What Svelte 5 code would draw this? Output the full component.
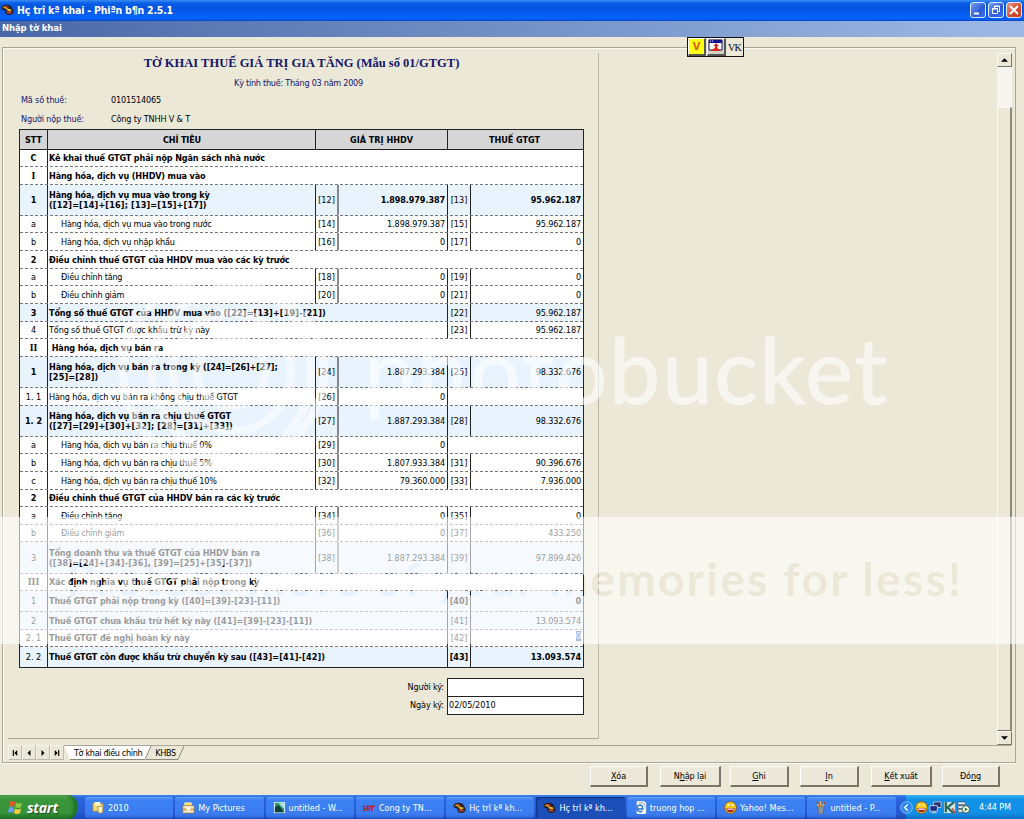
<script lang="ts">
  type Row = {
    no: string;
    name: string;
    formula?: string;
    wrap?: boolean;
    h: number;
    bold?: boolean;
    boldNo?: boolean;
    indent?: boolean;
    blue?: boolean;
    c1?: string;
    v1?: string;
    c2?: string;
    v2?: string;
    boldValue?: boolean;
    boldCode?: boolean;
    selected?: boolean;
  };

  const rows: Row[] = [
    { no: "C", name: "Kê khai thuế GTGT phải nộp Ngân sách nhà nước", h: 17, bold: true, boldNo: true },
    { no: "I", name: "Hàng hóa, dịch vụ (HHDV) mua vào", h: 18, bold: true, boldNo: true },
    { no: "1", name: "Hàng hóa, dịch vụ mua vào trong kỳ", formula: "([12]=[14]+[16]; [13]=[15]+[17])", wrap: true, h: 31, bold: true, boldNo: true, blue: true, c1: "[12]", v1: "1.898.979.387", c2: "[13]", v2: "95.962.187", boldValue: true },
    { no: "a", name: "Hàng hóa, dịch vụ mua vào trong nước", h: 17, indent: true, c1: "[14]", v1: "1.898.979.387", c2: "[15]", v2: "95.962.187" },
    { no: "b", name: "Hàng hóa, dịch vụ nhập khẩu", h: 18, indent: true, c1: "[16]", v1: "0", c2: "[17]", v2: "0" },
    { no: "2", name: "Điều chỉnh thuế GTGT của HHDV mua vào các kỳ trước", h: 18, bold: true, boldNo: true },
    { no: "a", name: "Điều chỉnh tăng", h: 17, indent: true, c1: "[18]", v1: "0", c2: "[19]", v2: "0" },
    { no: "b", name: "Điều chỉnh giảm", h: 18, indent: true, c1: "[20]", v1: "0", c2: "[21]", v2: "0" },
    { no: "3", name: "Tổng số thuế GTGT của HHDV mua vào", formula: "([22]=[13]+[19]-[21])", h: 18, bold: true, boldNo: true, blue: true, c2: "[22]", v2: "95.962.187" },
    { no: "4", name: "Tổng số thuế GTGT được khấu trừ kỳ này", h: 17, c2: "[23]", v2: "95.962.187" },
    { no: "II", name: "\u00a0Hàng hóa, dịch vụ bán ra", h: 18, bold: true, boldNo: true },
    { no: "1", name: "Hàng hóa, dịch vụ bán ra trong kỳ ([24]=[26]+[27];", formula: "[25]=[28])", wrap: true, h: 31, bold: true, boldNo: true, blue: true, c1: "[24]", v1: "1.887.293.384", c2: "[25]", v2: "98.332.676" },
    { no: "1. 1", name: "Hàng hóa, dịch vụ bán ra không chịu thuế GTGT", h: 18, c1: "[26]", v1: "0" },
    { no: "1. 2", name: "Hàng hóa, dịch vụ bán ra chịu thuế GTGT", formula: "([27]=[29]+[30]+[32]; [28]=[31]+[33])", wrap: true, h: 31, bold: true, boldNo: true, blue: true, c1: "[27]", v1: "1.887.293.384", c2: "[28]", v2: "98.332.676" },
    { no: "a", name: "Hàng hóa, dịch vụ bán ra chịu thuế 0%", h: 17, indent: true, c1: "[29]", v1: "0" },
    { no: "b", name: "Hàng hóa, dịch vụ bán ra chịu thuế 5%", h: 18, indent: true, c1: "[30]", v1: "1.807.933.384", c2: "[31]", v2: "90.396.676" },
    { no: "c", name: "Hàng hóa, dịch vụ bán ra chịu thuế 10%", h: 18, indent: true, c1: "[32]", v1: "79.360.000", c2: "[33]", v2: "7.936.000" },
    { no: "2", name: "Điều chỉnh thuế GTGT của HHDV bán ra các kỳ trước", h: 17, bold: true, boldNo: true },
    { no: "a", name: "Điều chỉnh tăng", h: 18, indent: true, c1: "[34]", v1: "0", c2: "[35]", v2: "0" },
    { no: "b", name: "Điều chỉnh giảm", h: 17, indent: true, c1: "[36]", v1: "0", c2: "[37]", v2: "433.250" },
    { no: "3", name: "Tổng doanh thu và thuế GTGT của HHDV bán ra", formula: "([38]=[24]+[34]-[36], [39]=[25]+[35]-[37])", wrap: true, h: 32, bold: true, blue: true, c1: "[38]", v1: "1.887.293.384", c2: "[39]", v2: "97.899.426" },
    { no: "III", name: "Xác định nghĩa vụ thuế GTGT phải nộp trong kỳ", h: 17, bold: true, boldNo: true },
    { no: "1", name: "Thuế GTGT phải nộp trong kỳ", formula: "([40]=[39]-[23]-[11])", h: 21, bold: true, blue: true, c2: "[40]", v2: "0", boldValue: true, boldCode: true },
    { no: "2", name: "Thuế GTGT chưa khấu trừ hết kỳ này", formula: "([41]=[39]-[23]-[11])", h: 18, bold: true, blue: true, c2: "[41]", v2: "13.093.574" },
    { no: "2. 1", name: "Thuế GTGT đề nghị hoàn kỳ này", h: 17, bold: true, c2: "[42]", v2: "0", selected: true },
    { no: "2. 2", name: "Thuế GTGT còn được khấu trừ chuyển kỳ sau", formula: "([43]=[41]-[42])", h: 21, bold: true, blue: true, c2: "[43]", v2: "13.093.574", boldValue: true, boldCode: true },
  ];

  const actions = [
    { before: "", key: "X", after: "óa", width: 58, gap: 12 },
    { before: "N", key: "h", after: "ập lại", width: 61, gap: 9 },
    { before: "", key: "G", after: "hi", width: 59, gap: 11 },
    { before: "", key: "I", after: "n", width: 59, gap: 12 },
    { before: "", key: "K", after: "ết xuất", width: 61, gap: 10 },
    { before: "Đó", key: "n", after: "g", width: 58, gap: 0 },
  ];

  const tasks = [
    { icon: "folder", label: "2010" },
    { icon: "pictures", label: "My Pictures" },
    { icon: "image", label: "untitled - W..." },
    { icon: "srt", label: "Cong ty TN..." },
    { icon: "app", label: "Hç trî kª kh..." },
    { icon: "app", label: "Hç trî kª kh...", active: true },
    { icon: "ie", label: "truong hop ..." },
    { icon: "smile", label: "Yahoo! Mes..." },
    { icon: "paint", label: "untitled - P..." },
  ];
</script>

{#snippet icon(name: string)}
  <svg class="icon" viewBox="0 0 14 14" width="13" height="13">
    {#if name === "folder"}
      <path d="M1 2h4l1 1h6v8H1z" fill="#f5d774" stroke="#a8832a" stroke-width=".7" />
      <path d="M3 1h6v4H3z" fill="#fff6c8" />
      <path d="M6 6h6l-1 7H7z" fill="#fff3b8" stroke="#8b7a4a" stroke-width=".7" />
    {:else if name === "pictures"}
      <path d="M3 5V2h7v3" fill="#ffd86b" stroke="#f7e9ad" />
      <path d="M1 5h12v8H1z" fill="#f4e9c5" stroke="#a57b26" stroke-width=".7" />
      <path d="M1 8h12v2H1z" fill="#d89b3a" />
      <path d="M5 7h4v3H5z" fill="#fff" />
    {:else if name === "image"}
      <path d="M1 1h12v12H1z" fill="#e7f4f0" />
      <path d="M2 2h10v10H2z" fill="#2f9a70" />
      <path d="M2 7l4-3 6 8H2z" fill="#123f3c" />
      <path d="M6 3l6-1v6z" fill="#aee4f2" />
    {:else if name === "srt"}
      <text x="-1" y="10.5" class="icon__srt">SRT</text>
    {:else if name === "app"}
      <ellipse cx="6" cy="5" rx="5.5" ry="3.2" fill="#1c1c26" />
      <ellipse cx="9" cy="9" rx="4.6" ry="4" fill="#33262b" />
      <path d="M1 5l4-1 2 2 4 1v2H8L5 6z" fill="#e8b82a" />
      <path d="M2 3l5 .5L9 5 4 4.500zM6 9l5 1 1 1H7z" fill="#d64a30" />
    {:else if name === "ie"}
      <path d="M3 0h8l2 2v12H3z" fill="#fff" stroke="#9ab" stroke-width=".6" />
      <path d="M9.5 8.5H3.5a3 3 0 1 1 5.8-1zM9 10.4a3.2 3.2 0 0 1-5.4-1" fill="none" stroke="#2472d8" stroke-width="1.6" />
      <path d="M5 2h6M10 4h2M11 6h1" stroke="#79a" />
    {:else if name === "smile"}
      <circle cx="7" cy="7" r="6.4" fill="#f8c916" stroke="#8c4c10" stroke-width=".8" />
      <path d="M2.5 7.5h9c0 6-9 6-9 0z" fill="#a62015" />
      <path d="M3.5 8h7v1.5h-7z" fill="#fff" />
      <circle cx="4.8" cy="4.4" r="1.1" fill="#fff" />
      <circle cx="9.2" cy="4.4" r="1.1" fill="#fff" />
    {:else if name === "paint"}
      <path d="M4 6h7l-1 8H5z" fill="#8a96a8" stroke="#445" stroke-width=".6" />
      <path d="M5 6L3 1M7 6V0M9 6l3-5" stroke="#e9a83a" stroke-width="1.6" />
      <path d="M3 1l1 2M12 1l-1 2" stroke="#8f3319" stroke-width="1.4" />
    {/if}
  </svg>
{/snippet}

<div class="screen">
  <header class="titlebar">
    {@render icon("app")}
    <span class="titlebar__text">Hç trî kª khai - Phiªn b¶n 2.5.1</span>
    <button class="win" type="button" aria-label="Minimize">
      <svg viewBox="0 0 16 16" width="16" height="16"><path d="M4 11.5h5" stroke="#fff" stroke-width="2" /></svg>
    </button>
    <button class="win" type="button" aria-label="Restore">
      <svg viewBox="0 0 16 16" width="16" height="16" fill="none" stroke="#fff">
        <path d="M6.5 6V4.5h5v5H10" /><path d="M4.5 6.5h5v5h-5z" /><path d="M6 4h6M4 7h6" />
      </svg>
    </button>
    <button class="win win--close" type="button" aria-label="Close">
      <svg viewBox="0 0 16 16" width="16" height="16"><path d="M4 4l8 8M12 4l-8 8" stroke="#fff" stroke-width="2" /></svg>
    </button>
  </header>
  <div class="caption">Nhập tờ khai</div>

  <div class="unikey">
    <span class="unikey__v">V</span>
    <span class="unikey__pic">
      <svg viewBox="0 0 16 14" width="16" height="14">
        <path d="M1 1h13v10H1z" fill="#fff" stroke="#161670" />
        <path d="M1 1h13v3H1z" fill="#10108a" />
        <path d="M2 2h1M4 2h1" stroke="#fff" />
        <path d="M8 4l3 3H9.500v2L13 12H2l5-3V7H5.500z" fill="#d92718" />
      </svg>
    </span>
    <span class="unikey__vk">VK</span>
  </div>

  <main class="frame">
    <div class="frame__body">
      <section class="sheet">
        <h1>TỜ KHAI THUẾ GIÁ TRỊ GIA TĂNG (Mẫu số 01/GTGT)</h1>
        <p class="period">Kỳ tính thuế: Tháng 03 năm 2009</p>
        <dl class="info">
          <dt>Mã số thuế:</dt>
          <dd>0101514065</dd>
          <dt>Người nộp thuế:</dt>
          <dd>Công ty TNHH V &amp; T</dd>
        </dl>

        <div class="table">
          <div class="row row--head">
            <div class="cell cell--no">STT</div>
            <div class="cell cell--name">CHỈ TIÊU</div>
            <div class="cell cell--group">GIÁ TRỊ HHDV</div>
            <div class="cell cell--last">THUẾ GTGT</div>
          </div>
          {#each rows as row}
            <div class="row" class:row--blue={row.blue} style="height: {row.h}px">
              <div class="cell cell--no" class:bold={row.boldNo} class:roman={row.no.startsWith("I")}>{row.no}</div>
              <div class="cell cell--name" class:bold={row.bold} class:cell--indent={row.indent} class:cell--open={!row.c1}>
                {row.name}
                {#if row.formula}{#if row.wrap}<br />{/if}<span class="formula">{row.formula}</span>{/if}
              </div>
              {#if row.c1}
                <div class="cell cell--code cell--grey">{row.c1}</div>
                <div class="cell cell--value" class:bold={row.boldValue}>{row.v1}</div>
              {:else}
                <div class="cell cell--blank" class:cell--line={row.c2}></div>
              {/if}
              {#if row.c2}
                <div class="cell cell--code" class:bold={row.boldCode}>{row.c2}</div>
                <div class="cell cell--tax" class:bold={row.boldValue}>
                  <span class:selected={row.selected}>{row.v2}</span>
                </div>
              {/if}
            </div>
          {/each}
        </div>

        <div class="sign">
          <label for="signer">Người ký:</label>
          <input id="signer" type="text" value="" />
          <label for="date">Ngày ký:</label>
          <input id="date" type="text" value="02/05/2010" />
        </div>
      </section>

      <div class="scroll">
        <div class="scroll__btn"><svg viewBox="0 0 8 4" width="7" height="4"><path d="M0 4l4-4 4 4z" /></svg></div>
        <div class="scroll__track"></div>
        <div class="scroll__thumb"></div>
        <div class="scroll__btn"><svg viewBox="0 0 8 4" width="7" height="4"><path d="M0 0l4 4 4-4z" /></svg></div>
      </div>
    </div>

    <nav class="tabs">
      <span class="nav"><svg viewBox="0 0 8 8" width="6" height="6"><path d="M1 0h1.5v8H1zM7 0v8L3 4z" /></svg></span>
      <span class="nav"><svg viewBox="0 0 8 8" width="6" height="6"><path d="M6 0v8L2 4z" /></svg></span>
      <span class="nav"><svg viewBox="0 0 8 8" width="6" height="6"><path d="M2 0v8l4-4z" /></svg></span>
      <span class="nav"><svg viewBox="0 0 8 8" width="6" height="6"><path d="M5.500 0H7v8H5.500zM1 0v8l4-4z" /></svg></span>
      <div class="tabs__list">
        <svg class="tabs__shape" viewBox="0 0 130 14" width="130" height="14">
          <path d="M82 13.500h32L120 0" fill="none" stroke="#8d8a7c" />
          <path d="M0 0h87l-6 13H6z" fill="#fff" />
          <path d="M6 13.500h75L87 0" fill="none" stroke="#8d8a7c" />
        </svg>
        <span class="tab">Tờ khai điều chỉnh</span>
        <span class="tab tab--next">KHBS</span>
      </div>
    </nav>
  </main>

  <div class="actions">
    {#each actions as a}
      <button type="button" class="action" style="width: {a.width}px; margin-right: {a.gap}px"
        >{a.before}<u>{a.key}</u>{a.after}</button
      >
    {/each}
  </div>

  <footer class="taskbar">
    <button type="button" class="start">
      <svg viewBox="0 0 16 16" width="16" height="16">
        <path d="M2 3q3-2 5 0L6 8q-2-2-5 0z" fill="#e8542c" />
        <path d="M8 3.500q3 2 6 0L13 8q-3 2-6 0z" fill="#8ccb3f" />
        <path d="M1 9q3-2 5 0l-1 5q-2-2-5 0z" fill="#6f9ff5" />
        <path d="M7 9.500q3 2 6 0L12 14q-3 2-6 0z" fill="#f9cf3b" />
      </svg>
      start
    </button>
    <div class="tasks">
      {#each tasks as t}
        <div class="task" class:task--active={t.active}>{@render icon(t.icon)}<span>{t.label}</span></div>
      {/each}
    </div>
    <div class="tray">
      <svg class="tray__arrow" viewBox="0 0 14 14" width="13" height="13">
        <circle cx="7" cy="7" r="6.300" fill="#2b86ee" stroke="#a9d6ff" stroke-width=".8" />
        <path d="M8.500 3.500L5 7l3.500 3.500" fill="none" stroke="#fff" stroke-width="1.600" />
      </svg>
      {@render icon("smile")}
      <svg viewBox="0 0 14 14" width="13" height="13">
        <path d="M5 1h8v6H5z" fill="#26356e" stroke="#b9c6de" />
        <path d="M1 5h8v6H1z" fill="#1b2b86" stroke="#c6d2e8" />
        <path d="M3 12.500h5" stroke="#d6deed" />
      </svg>
      <svg viewBox="0 0 14 14" width="13" height="13">
        <path d="M1 1h12v12H1z" fill="#cfe3df" />
        <path d="M3 1v11M12 1L5 7l6 6" fill="none" stroke="#27675c" stroke-width="2.400" />
        <path d="M10 8l3 5" stroke="#c23a2c" stroke-width="1.500" />
      </svg>
      <svg viewBox="0 0 14 14" width="13" height="13">
        <path d="M1 1h8v3H1zM1 5h8v3H1zM1 9h8v3H1z" fill="#e9eef2" stroke="#44566b" stroke-width=".8" />
        <circle cx="9.500" cy="9" r="4" fill="#fff" stroke="#385a38" />
        <path d="M8.300 6.800v4.400l3.200-2.200z" fill="#17882b" />
      </svg>
      <span class="clock">4:44 PM</span>
    </div>
  </footer>

  <svg class="watermark" viewBox="0 0 1024 819" width="1024" height="819">
    <defs>
      <mask id="tagline">
        <rect width="1024" height="819" fill="#fff" />
        <text x="66" y="596" class="watermark__tag" textLength="895" fill="#000">Protect more of your memories for less!</text>
      </mask>
    </defs>
    <rect y="517" width="1024" height="127" fill="#fff" fill-opacity=".6" mask="url(#tagline)" />
    <text x="364" y="404" class="watermark__name" textLength="523">photobucket</text>
    <g class="watermark__logo">
      <circle cx="217" cy="372" r="94" />
      <circle cx="238" cy="372" r="86" />
      <circle cx="232" cy="372" r="59" />
      <circle cx="231" cy="372" r="34" />
    </g>
  </svg>
</div>

<style>
  :global(body) {
    margin: 0;
    overflow: hidden;
  }

  .screen {
    position: relative;
    display: flex;
    flex-direction: column;
    width: 1024px;
    height: 819px;
    overflow: hidden;

    color: #000;
    font-family: "DejaVu Sans Condensed", "DejaVu Sans", sans-serif;
    font-stretch: condensed;
    font-size: 9px;

    background: #ebe8d8;
  }

  .screen * {
    box-sizing: border-box;
  }

  svg {
    display: block;
    flex: none;
  }

  .bold {
    font-weight: bold;
  }

  .titlebar {
    display: flex;
    align-items: center;
    gap: 2px;
    flex: none;
    height: 21px;
    padding: 0 2px 2px 1px;

    color: #fff;
    font-size: 11px;
    font-weight: bold;

    background: linear-gradient(#3a8cf5 0, #0a5fe8 3px, #0453dd 8px, #0562f8 16px, #0560f6 19px, #0344c8 21px);
  }

  .titlebar__text {
    flex: 1;
    margin-left: 1px;
    font-size: 10.500px;
    letter-spacing: -0.2px;
  }

  .win {
    width: 16px;
    height: 16px;
    padding: 0;

    border: 1px solid #dce8fb;
    border-radius: 3px;
    background: linear-gradient(135deg, #7ba0f0, #2a59d8 60%, #3d72ea);
  }

  .win svg {
    margin: -1px;
  }

  .win--close {
    background: linear-gradient(135deg, #eb9580, #d3492b 60%, #c93e1e);
  }

  .caption {
    flex: none;
    height: 16px;
    padding-left: 2px;

    color: #fff;
    font-size: 9.500px;
    font-weight: bold;
    line-height: 14px;
    letter-spacing: -0.15px;

    background: linear-gradient(90deg, #4a68a6, #9cb9e6);
  }

  .unikey {
    position: absolute;
    top: 37px;
    left: 687px;
    z-index: 1;
    display: flex;
    gap: 1px;
    width: 57px;
    height: 20px;

    border: 1px solid #111;
    background: #ebe8d8;
  }

  .unikey__v,
  .unikey__pic {
    width: 18px;
    height: 18px;

    border: 1px solid #fff;
    border-right: 2px solid #555;
    border-bottom: 2px solid #555;
    background: #d4d0c8;
  }

  .unikey__v {
    color: #d8631a;
    font-size: 11px;
    font-weight: bold;
    line-height: 15px;
    text-align: center;

    background: #ff1;
  }

  .unikey__pic {
    width: 19px;
  }

  .unikey__vk {
    padding-left: 1px;
    font: 10px/19px "Liberation Serif", serif;
    letter-spacing: -0.8px;
  }

  .frame {
    display: flex;
    flex-direction: column;
    flex: none;
    height: 716px;
    margin: 10px 8px 0 2px;

    border: 1px solid #a9a698;
    box-shadow: inset 1px 1px #fbfaf4, 0 1px #fbfaf4;
  }

  .frame__body {
    display: flex;
    justify-content: space-between;
    flex: none;
    height: 697px;
    padding: 5px 3px 0 5px;
  }

  .sheet {
    width: 591px;
    height: 686px;
    padding: 2px 0 0 11px;

    border-right: 1px solid #bab7a8;
    border-bottom: 1px solid #a9a698;
  }

  h1 {
    width: 565px;
    margin: 0;

    color: #15156a;
    font: bold 12.500px/17px "Liberation Serif", serif;
    text-align: center;
    white-space: nowrap;
  }

  .period {
    width: 559px;
    margin: 3px 0 1px;

    color: #15156a;
    line-height: 16px;
    letter-spacing: -0.25px;
    text-align: center;
  }

  .info {
    display: grid;
    grid-template-columns: 90px 1fr;
    grid-auto-rows: 19px;
    margin: 0 0 -1px 2px;

    line-height: 16px;
    letter-spacing: -0.15px;
  }

  .info dt {
    color: #15156a;
  }

  .info dd {
    margin: 0;
  }

  .table {
    width: 565px;

    border: 1px solid #222;
    border-bottom: 0;
    background: #fff;
  }

  .row {
    display: flex;
    border-bottom: 1px dashed #777;
  }

  .row:last-child {
    border-bottom: 1px solid #222;
  }

  .row--blue {
    background: #e8f3fd;
  }

  .row--head {
    height: 20px;
    font-weight: bold;
    border-bottom: 1px solid #222;
    background: #d6d6d6;
  }

  .cell {
    display: flex;
    align-items: center;
    flex: none;
    line-height: 10px;
    white-space: nowrap;
    border-right: 1px solid #222;
  }

  .cell--no {
    justify-content: center;
    width: 28px;
  }

  .cell--name {
    display: block;
    align-content: center;
    width: 268px;
    padding-left: 1px;
    letter-spacing: -0.13px;
  }

  .cell--indent {
    padding-left: 13px;
    letter-spacing: -0.2px;
  }

  .formula {
    letter-spacing: 0.16px;
  }

  .cell--open {
    overflow: visible;
    border-right: 0;
  }

  .row--head .cell--name {
    text-align: center;
  }

  .cell--group,
  .cell--blank {
    justify-content: center;
    width: 132px;
  }

  .cell--blank {
    border-right: 0;
  }

  .cell--line {
    border-right: 1px solid #222;
  }

  .cell--code {
    justify-content: center;
    width: 23px;
  }

  .cell--grey {
    border-right: 2px solid #888;
  }

  .cell--value {
    justify-content: flex-end;
    width: 109px;
    padding-right: 2px;
  }

  .cell--tax,
  .cell--last {
    justify-content: flex-end;
    width: 112px;
    padding-right: 2px;
    border-right: 0;
  }

  .cell--value,
  .cell--tax {
    letter-spacing: -0.1px;
  }

  .cell--last {
    justify-content: center;
    width: 135px;
  }

  .roman {
    font-family: "DejaVu Serif Condensed", "DejaVu Serif", serif;
  }

  .selected {
    margin-top: -4px;
    color: #fff;
    background: #2a55b0;
  }

  .sign {
    display: grid;
    grid-template-columns: 425px 137px;
    grid-template-rows: 18px 18px;
    column-gap: 3px;
    margin: 10px 0 0;
    align-items: center;

    letter-spacing: -0.1px;
    text-align: right;
  }

  .sign input {
    height: 19px;
    padding: 0 1px;

    font: inherit;

    border: 1px solid #222;
    border-radius: 0;
    background: #fff;
  }

  .scroll {
    display: flex;
    flex-direction: column;
    width: 15px;
    height: 692px;
  }

  .scroll__btn {
    display: flex;
    align-items: center;
    justify-content: center;
    height: 14px;

    border: 1px solid #fbfaf4;
    border-right-color: #77756a;
    border-bottom-color: #77756a;
  }

  .scroll__track {
    height: 40px;
    background: #f5f4ee;
  }

  .scroll__thumb {
    flex: 1;
    border: 1px solid #fbfaf4;
    border-right: 2px solid #8d8a7c;
    border-bottom-color: #77756a;
  }

  .tabs {
    display: flex;
    padding-left: 5px;
  }

  .nav {
    display: flex;
    align-items: center;
    justify-content: center;
    width: 14px;
    height: 15px;

    border: 1px solid #f5f3ea;
    border-right-color: #bdbaab;
    border-bottom-color: #bdbaab;
  }

  .tabs__list {
    position: relative;
    display: flex;
    flex: 1;
    margin-right: 4px;

    line-height: 14px;
    letter-spacing: -0.33px;

    border-top: 1px solid #a9a698;
  }

  .tabs__shape {
    position: absolute;
    top: 0;
    left: 0;
  }

  .tab {
    position: relative;
    margin-left: 10px;
  }

  .tab--next {
    margin-left: 13px;
  }

  .actions {
    display: flex;
    flex: none;
    height: 32px;
    padding: 3px 0 0 590px;
  }

  .action {
    flex: none;
    height: 21px;
    padding: 0;

    font: inherit;
    letter-spacing: -0.1px;

    border: 1px solid #fffef8;
    border-right: 2px solid #77756a;
    border-bottom: 2px solid #77756a;
    background: #ece9da;
  }

  .taskbar {
    display: flex;
    flex: none;
    height: 24px;

    color: #fff;

    background: linear-gradient(#3f84ef 0, #2a65dd 3px, #2459d3 18px, #1c47b0);
  }

  .start {
    display: flex;
    align-items: center;
    gap: 3px;
    width: 77px;
    padding: 0 0 0 8px;

    color: #fff;
    font: italic bold 14px "Open Sans", sans-serif;
    letter-spacing: -0.3px;
    text-shadow: 1px 1px 1px #1d4a1d;

    border: 0;
    border-radius: 0 9px 9px 0;
    background: linear-gradient(#6abf69 0, #3b963b 4px, #37943a 18px, #226f25);
    box-shadow: inset -3px 0 4px #1f6b24;
  }

  .tasks {
    display: flex;
    gap: 2px;
    flex: 1;
    padding: 2px 0 1px 8px;
  }

  .task {
    display: flex;
    align-items: center;
    gap: 3px;
    width: 88.300px;
    padding-left: 7px;
    overflow: hidden;

    white-space: nowrap;

    border-radius: 2px;
    background: linear-gradient(#65a0fa 0, #3c81f3 3px, #3b7cf0 17px, #2e67d8);
  }

  .task--active {
    background: #1c4fb8;
    box-shadow: inset 1px 1px 2px #0d2f80;
  }

  .tray {
    display: flex;
    align-items: center;
    gap: 1px;
    width: 118px;
    padding-right: 13px;

    background: linear-gradient(#3bb5f5 0, #1291e8 4px, #1290e8 18px, #0d6fc4);
  }

  .tray__arrow {
    margin-left: -6px;
    margin-right: 1px;
  }

  .clock {
    margin-left: auto;
    letter-spacing: -0.1px;
    white-space: nowrap;
  }

  .icon__srt {
    fill: #c01822;
    font: italic bold 8px "DejaVu Sans Condensed", sans-serif;
    letter-spacing: -0.8px;
  }

  .watermark {
    position: absolute;
    inset: 0;
    z-index: 2;
    pointer-events: none;
  }

  .watermark__name {
    opacity: 0.6;
    fill: #fff;
    stroke: #fff;
    stroke-width: 1px;
    font: 91px Lato, sans-serif;
  }

  .watermark__tag {
    font: bold 46px Lato, sans-serif;
  }

  .watermark__logo {
    opacity: 0.55;
    fill: none;
    stroke: #fff;
    stroke-width: 8px;
  }
</style>
